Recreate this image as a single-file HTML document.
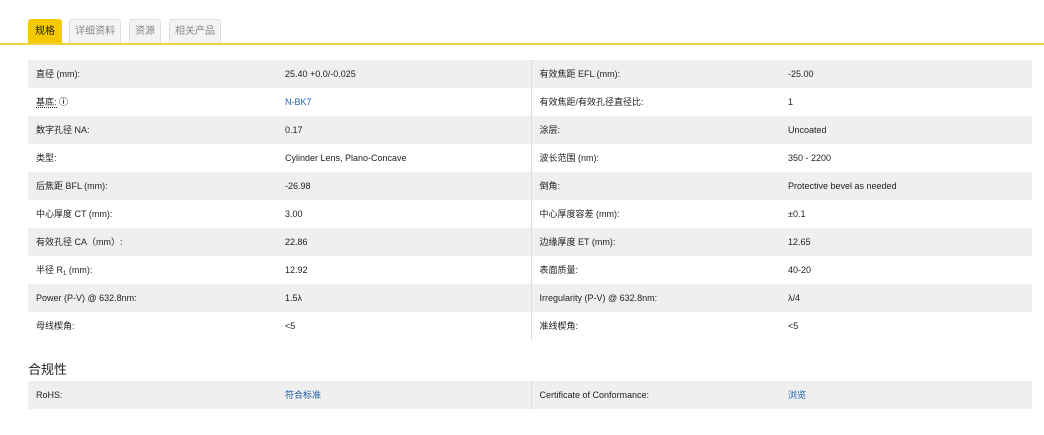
<!DOCTYPE html>
<html><head><meta charset="utf-8"><style>
body{margin:0;width:1044px;height:435px;background:#fff;font-family:"Liberation Sans","Noto Sans CJK SC",sans-serif;color:#222;position:relative;overflow:hidden}
.tab{position:absolute;top:19px;height:24px;box-sizing:border-box;font-size:10px;line-height:24px;text-align:center;color:#888;background:#f3f3f3;border:1px solid #ddd;border-bottom:none;border-radius:3px 3px 0 0}
.tab.a{background:#f5c800;color:#222;border-color:#f5c800}
.line{position:absolute;top:43px;left:0;width:1044px;height:2px;background:#f1d23a}
table{position:absolute;left:28px;border-collapse:collapse;width:1004px;font-size:9px;table-layout:fixed}
td{height:28px;padding:0;vertical-align:middle;line-height:12px;white-space:nowrap}
td span.t{display:inline-block;line-height:12px;vertical-align:middle}
tr:nth-child(odd) td{background:#efefef}
td.l{padding-left:8px;width:249px}
td.v{width:246px}
td.l2{padding-left:8px;width:249px;border-left:1px solid #ddd}
a{color:#1f5fa8;text-decoration:none}
sub{font-size:6px;line-height:0;vertical-align:-2px}
h3{position:absolute;left:28px;top:359px;margin:0;font-size:13px;font-weight:normal;color:#222}
</style></head><body>
<div class="tab a" style="left:28px;width:34px">规格</div>
<div class="tab" style="left:69px;width:52px">详细资料</div>
<div class="tab" style="left:129px;width:32px">资源</div>
<div class="tab" style="left:169px;width:52px">相关产品</div>
<div class="line"></div>
<table style="top:60px">
<colgroup><col style="width:257px"><col style="width:246px"><col style="width:257px"><col></colgroup>
<tr><td class="l">直径 (mm):</td><td class="v">25.40 +0.0/-0.025</td><td class="l2">有效焦距 EFL (mm):</td><td>-25.00</td></tr>
<tr><td class="l"><span style="border-bottom:1px dotted #222">基底:</span> <b>ⓘ</b></td><td class="v"><a>N-BK7</a></td><td class="l2">有效焦距/有效孔径直径比:</td><td>1</td></tr>
<tr><td class="l">数字孔径 NA:</td><td class="v">0.17</td><td class="l2">涂层:</td><td>Uncoated</td></tr>
<tr><td class="l">类型:</td><td class="v">Cylinder Lens, Plano-Concave</td><td class="l2">波长范围 (nm):</td><td>350 - 2200</td></tr>
<tr><td class="l">后焦距 BFL (mm):</td><td class="v">-26.98</td><td class="l2">倒角:</td><td>Protective bevel as needed</td></tr>
<tr><td class="l">中心厚度 CT (mm):</td><td class="v">3.00</td><td class="l2">中心厚度容差 (mm):</td><td>±0.1</td></tr>
<tr><td class="l">有效孔径 CA（mm）:</td><td class="v">22.86</td><td class="l2">边缘厚度 ET (mm):</td><td>12.65</td></tr>
<tr><td class="l">半径 R<sub>1</sub> (mm):</td><td class="v">12.92</td><td class="l2">表面质量:</td><td>40-20</td></tr>
<tr><td class="l">Power (P-V) @ 632.8nm:</td><td class="v">1.5λ</td><td class="l2">Irregularity (P-V) @ 632.8nm:</td><td>λ/4</td></tr>
<tr><td class="l">母线楔角:</td><td class="v">&lt;5</td><td class="l2">准线楔角:</td><td>&lt;5</td></tr>
</table>
<h3>合规性</h3>
<table style="top:381px">
<colgroup><col style="width:257px"><col style="width:246px"><col style="width:257px"><col></colgroup>
<tr><td class="l">RoHS:</td><td class="v"><a>符合标准</a></td><td class="l2">Certificate of Conformance:</td><td><a>浏览</a></td></tr>
</table>
</body></html>
